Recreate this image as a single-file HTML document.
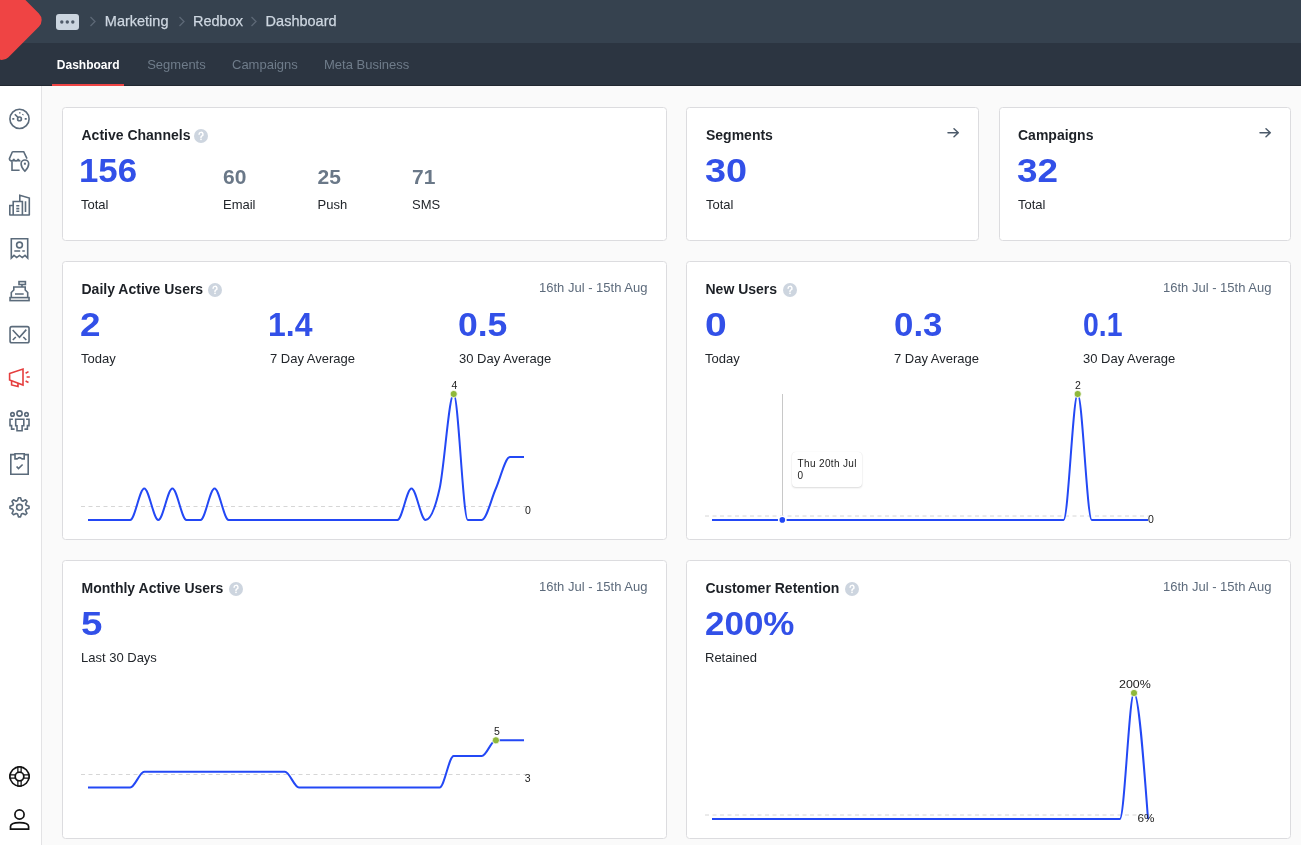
<!DOCTYPE html>
<html><head><meta charset="utf-8"><title>Dashboard</title>
<style>
html,body{margin:0;padding:0}
body{width:1301px;height:845px;overflow:hidden;position:relative;background:#fafafa;font-family:"Liberation Sans",sans-serif}
.abs{position:absolute;display:block}
.t{position:absolute;white-space:nowrap}
.card{position:absolute;box-sizing:border-box;background:#fff;border:1px solid #dcdcdf;border-radius:3.5px}
.q{position:absolute}
.q svg{display:block}
.tip{position:absolute;box-sizing:border-box;background:#fff;border-radius:4px;box-shadow:0 0 1px rgba(0,0,0,0.10),0 1px 2px rgba(0,0,0,0.14)}
</style></head><body><div id="root" style="position:absolute;left:0;top:0;width:1301px;height:845px;will-change:transform">
<div class="card" style="left:62px;top:107px;width:605px;height:134px"></div>
<div class="card" style="left:686px;top:107px;width:293px;height:134px"></div>
<div class="card" style="left:999px;top:107px;width:292px;height:134px"></div>
<div class="card" style="left:62px;top:261px;width:605px;height:279px"></div>
<div class="card" style="left:686px;top:261px;width:605px;height:279px"></div>
<div class="card" style="left:62px;top:560px;width:605px;height:279px"></div>
<div class="card" style="left:686px;top:560px;width:605px;height:279px"></div>
<div class="t" style="left:81.5px;top:126.65px;font-size:14px;line-height:17px;font-weight:700;color:#1d2127;">Active Channels</div>
<div class="q" style="left:194.0px;top:129.0px;width:14px;height:14px;"><svg width="14" height="14" viewBox="0 0 14 14"><circle cx="7" cy="7" r="7" fill="#cdd5df"/><path d="M5.1 5.3a1.95 1.95 0 1 1 2.6 1.85c-.45.2-.7.5-.7 1v.45" fill="none" stroke="#fff" stroke-width="1.5" stroke-linecap="round"/><circle cx="7" cy="10.3" r="0.85" fill="#fff"/></svg></div>
<div class="t" style="left:79.35272045028144px;top:150.22px;font-size:34px;line-height:41px;font-weight:700;color:#3250e8;transform:scaleX(1.0225);transform-origin:0 0">156</div>
<div class="t" style="left:81px;top:196.70px;font-size:13px;line-height:16px;font-weight:400;color:#22262b;">Total</div>
<div class="t" style="left:223px;top:164.42px;font-size:21px;line-height:25px;font-weight:700;color:#6a7888;">60</div>
<div class="t" style="left:223px;top:196.70px;font-size:13px;line-height:16px;font-weight:400;color:#22262b;">Email</div>
<div class="t" style="left:317.5px;top:164.42px;font-size:21px;line-height:25px;font-weight:700;color:#6a7888;">25</div>
<div class="t" style="left:317.5px;top:196.70px;font-size:13px;line-height:16px;font-weight:400;color:#22262b;">Push</div>
<div class="t" style="left:412px;top:164.42px;font-size:21px;line-height:25px;font-weight:700;color:#6a7888;">71</div>
<div class="t" style="left:412px;top:196.70px;font-size:13px;line-height:16px;font-weight:400;color:#22262b;">SMS</div>
<div class="t" style="left:706px;top:126.65px;font-size:14px;line-height:17px;font-weight:700;color:#1d2127;">Segments</div>
<div class="t" style="left:704.9988764044944px;top:150.22px;font-size:34px;line-height:41px;font-weight:700;color:#3250e8;transform:scaleX(1.1124);transform-origin:0 0">30</div>
<div class="t" style="left:706px;top:196.70px;font-size:13px;line-height:16px;font-weight:400;color:#22262b;">Total</div>
<svg class="abs" style="left:946px;top:127.3px" width="14" height="12" viewBox="0 0 14 12"><path d="M2 5.7H12.3M8 1.7L12.3 5.7L8 9.7" fill="none" stroke="#4c5a6a" stroke-width="1.5" stroke-linecap="round" stroke-linejoin="round"/></svg>
<div class="t" style="left:1018px;top:126.65px;font-size:14px;line-height:17px;font-weight:700;color:#1d2127;">Campaigns</div>
<div class="t" style="left:1017.2243697478992px;top:150.22px;font-size:34px;line-height:41px;font-weight:700;color:#3250e8;transform:scaleX(1.0840);transform-origin:0 0">32</div>
<div class="t" style="left:1018px;top:196.70px;font-size:13px;line-height:16px;font-weight:400;color:#22262b;">Total</div>
<svg class="abs" style="left:1258px;top:127.3px" width="14" height="12" viewBox="0 0 14 12"><path d="M2 5.7H12.3M8 1.7L12.3 5.7L8 9.7" fill="none" stroke="#4c5a6a" stroke-width="1.5" stroke-linecap="round" stroke-linejoin="round"/></svg>
<div class="t" style="left:81.5px;top:280.75px;font-size:14px;line-height:17px;font-weight:700;color:#1d2127;">Daily Active Users</div>
<div class="q" style="left:207.6px;top:282.5px;width:14px;height:14px;"><svg width="14" height="14" viewBox="0 0 14 14"><circle cx="7" cy="7" r="7" fill="#cdd5df"/><path d="M5.1 5.3a1.95 1.95 0 1 1 2.6 1.85c-.45.2-.7.5-.7 1v.45" fill="none" stroke="#fff" stroke-width="1.5" stroke-linecap="round"/><circle cx="7" cy="10.3" r="0.85" fill="#fff"/></svg></div>
<div class="t" style="left:539px;top:280.10px;font-size:13px;line-height:16px;font-weight:400;color:#5d6b7c;">16th Jul - 15th Aug</div>
<div class="t" style="left:80.49756097560974px;top:303.72px;font-size:34px;line-height:41px;font-weight:700;color:#3250e8;transform:scaleX(1.0854);transform-origin:0 0">2</div>
<div class="t" style="left:81px;top:350.50px;font-size:13px;line-height:16px;font-weight:400;color:#22262b;">Today</div>
<div class="t" style="left:268.42628062360797px;top:303.72px;font-size:34px;line-height:41px;font-weight:700;color:#3250e8;transform:scaleX(0.9399);transform-origin:0 0">1.4</div>
<div class="t" style="left:270px;top:350.50px;font-size:13px;line-height:16px;font-weight:400;color:#22262b;">7 Day Average</div>
<div class="t" style="left:458.04209354120263px;top:303.72px;font-size:34px;line-height:41px;font-weight:700;color:#3250e8;transform:scaleX(1.0445);transform-origin:0 0">0.5</div>
<div class="t" style="left:459px;top:350.50px;font-size:13px;line-height:16px;font-weight:400;color:#22262b;">30 Day Average</div>
<div class="t" style="left:705.5px;top:280.75px;font-size:14px;line-height:17px;font-weight:700;color:#1d2127;">New Users</div>
<div class="q" style="left:782.8px;top:282.5px;width:14px;height:14px;"><svg width="14" height="14" viewBox="0 0 14 14"><circle cx="7" cy="7" r="7" fill="#cdd5df"/><path d="M5.1 5.3a1.95 1.95 0 1 1 2.6 1.85c-.45.2-.7.5-.7 1v.45" fill="none" stroke="#fff" stroke-width="1.5" stroke-linecap="round"/><circle cx="7" cy="10.3" r="0.85" fill="#fff"/></svg></div>
<div class="t" style="left:1163px;top:280.10px;font-size:13px;line-height:16px;font-weight:400;color:#5d6b7c;">16th Jul - 15th Aug</div>
<div class="t" style="left:705.0074074074074px;top:303.72px;font-size:34px;line-height:41px;font-weight:700;color:#3250e8;transform:scaleX(1.1481);transform-origin:0 0">0</div>
<div class="t" style="left:705px;top:350.50px;font-size:13px;line-height:16px;font-weight:400;color:#22262b;">Today</div>
<div class="t" style="left:894.267937219731px;top:303.72px;font-size:34px;line-height:41px;font-weight:700;color:#3250e8;transform:scaleX(1.0247);transform-origin:0 0">0.3</div>
<div class="t" style="left:894px;top:350.50px;font-size:13px;line-height:16px;font-weight:400;color:#22262b;">7 Day Average</div>
<div class="t" style="left:1083.4142538975502px;top:303.72px;font-size:34px;line-height:41px;font-weight:700;color:#3250e8;transform:scaleX(0.8352);transform-origin:0 0">0.1</div>
<div class="t" style="left:1083px;top:350.50px;font-size:13px;line-height:16px;font-weight:400;color:#22262b;">30 Day Average</div>
<div class="t" style="left:81.5px;top:579.75px;font-size:14px;line-height:17px;font-weight:700;color:#1d2127;">Monthly Active Users</div>
<div class="q" style="left:229.0px;top:581.5px;width:14px;height:14px;"><svg width="14" height="14" viewBox="0 0 14 14"><circle cx="7" cy="7" r="7" fill="#cdd5df"/><path d="M5.1 5.3a1.95 1.95 0 1 1 2.6 1.85c-.45.2-.7.5-.7 1v.45" fill="none" stroke="#fff" stroke-width="1.5" stroke-linecap="round"/><circle cx="7" cy="10.3" r="0.85" fill="#fff"/></svg></div>
<div class="t" style="left:539px;top:579.10px;font-size:13px;line-height:16px;font-weight:400;color:#5d6b7c;">16th Jul - 15th Aug</div>
<div class="t" style="left:80.64191616766466px;top:602.72px;font-size:34px;line-height:41px;font-weight:700;color:#3250e8;transform:scaleX(1.1317);transform-origin:0 0">5</div>
<div class="t" style="left:81px;top:649.50px;font-size:13px;line-height:16px;font-weight:400;color:#22262b;">Last 30 Days</div>
<div class="t" style="left:705.5px;top:579.75px;font-size:14px;line-height:17px;font-weight:700;color:#1d2127;">Customer Retention</div>
<div class="q" style="left:845.0px;top:581.5px;width:14px;height:14px;"><svg width="14" height="14" viewBox="0 0 14 14"><circle cx="7" cy="7" r="7" fill="#cdd5df"/><path d="M5.1 5.3a1.95 1.95 0 1 1 2.6 1.85c-.45.2-.7.5-.7 1v.45" fill="none" stroke="#fff" stroke-width="1.5" stroke-linecap="round"/><circle cx="7" cy="10.3" r="0.85" fill="#fff"/></svg></div>
<div class="t" style="left:1163px;top:579.10px;font-size:13px;line-height:16px;font-weight:400;color:#5d6b7c;">16th Jul - 15th Aug</div>
<div class="t" style="left:705.2660777385158px;top:602.72px;font-size:34px;line-height:41px;font-weight:700;color:#3250e8;transform:scaleX(1.0283);transform-origin:0 0">200%</div>
<div class="t" style="left:705px;top:649.50px;font-size:13px;line-height:16px;font-weight:400;color:#22262b;">Retained</div>
<svg class="abs" style="left:0;top:0" width="1301" height="845">
<g stroke="#d6d6d6" stroke-width="1" stroke-dasharray="4 3.5" fill="none">
<line x1="81" y1="506.5" x2="530" y2="506.5"/>
<line x1="705" y1="516" x2="1150" y2="516"/>
<line x1="81" y1="774.5" x2="530" y2="774.5"/>
<line x1="705" y1="815" x2="1150" y2="815"/>
</g>
<line x1="782.5" y1="394" x2="782.5" y2="520" stroke="#c8c8c8" stroke-width="1"/>
<g fill="none" stroke="#2348f5" stroke-width="2" stroke-linejoin="round">
<path d="M88.00,520.00C92.69,520.00,97.38,520.00,102.06,520.00C106.75,520.00,111.44,520.00,116.13,520.00C120.82,520.00,125.51,520.00,130.19,520.00C134.88,520.00,139.57,488.50,144.26,488.50C148.95,488.50,153.63,520.00,158.32,520.00C163.01,520.00,167.70,488.50,172.39,488.50C177.08,488.50,181.76,520.00,186.45,520.00C191.14,520.00,195.83,520.00,200.52,520.00C205.20,520.00,209.89,488.50,214.58,488.50C219.27,488.50,223.96,520.00,228.65,520.00C233.33,520.00,238.02,520.00,242.71,520.00C247.40,520.00,252.09,520.00,256.77,520.00C261.46,520.00,266.15,520.00,270.84,520.00C275.53,520.00,280.22,520.00,284.90,520.00C289.59,520.00,294.28,520.00,298.97,520.00C303.66,520.00,308.34,520.00,313.03,520.00C317.72,520.00,322.41,520.00,327.10,520.00C331.78,520.00,336.47,520.00,341.16,520.00C345.85,520.00,350.54,520.00,355.23,520.00C359.91,520.00,364.60,520.00,369.29,520.00C373.98,520.00,378.67,520.00,383.35,520.00C388.04,520.00,392.73,520.00,397.42,520.00C402.11,520.00,406.80,488.50,411.48,488.50C416.17,488.50,420.86,520.00,425.55,520.00C430.24,520.00,434.92,509.50,439.61,488.50C444.30,467.50,448.99,394.00,453.68,394.00C458.37,394.00,463.05,520.00,467.74,520.00C472.43,520.00,477.12,520.00,481.81,520.00C486.49,520.00,491.18,499.00,495.87,488.50C500.56,478.00,505.25,457.00,509.94,457.00C514.62,457.00,519.31,457.00,524.00,457.00"/>
<path d="M712.00,520.00C716.69,520.00,721.38,520.00,726.06,520.00C730.75,520.00,735.44,520.00,740.13,520.00C744.82,520.00,749.51,520.00,754.19,520.00C758.88,520.00,763.57,520.00,768.26,520.00C772.95,520.00,777.63,520.00,782.32,520.00C787.01,520.00,791.70,520.00,796.39,520.00C801.08,520.00,805.76,520.00,810.45,520.00C815.14,520.00,819.83,520.00,824.52,520.00C829.20,520.00,833.89,520.00,838.58,520.00C843.27,520.00,847.96,520.00,852.65,520.00C857.33,520.00,862.02,520.00,866.71,520.00C871.40,520.00,876.09,520.00,880.77,520.00C885.46,520.00,890.15,520.00,894.84,520.00C899.53,520.00,904.22,520.00,908.90,520.00C913.59,520.00,918.28,520.00,922.97,520.00C927.66,520.00,932.34,520.00,937.03,520.00C941.72,520.00,946.41,520.00,951.10,520.00C955.78,520.00,960.47,520.00,965.16,520.00C969.85,520.00,974.54,520.00,979.23,520.00C983.91,520.00,988.60,520.00,993.29,520.00C997.98,520.00,1002.67,520.00,1007.35,520.00C1012.04,520.00,1016.73,520.00,1021.42,520.00C1026.11,520.00,1030.80,520.00,1035.48,520.00C1040.17,520.00,1044.86,520.00,1049.55,520.00C1054.24,520.00,1058.92,520.00,1063.61,520.00C1068.30,520.00,1072.99,394.00,1077.68,394.00C1082.37,394.00,1087.05,520.00,1091.74,520.00C1096.43,520.00,1101.12,520.00,1105.81,520.00C1110.49,520.00,1115.18,520.00,1119.87,520.00C1124.56,520.00,1129.25,520.00,1133.94,520.00C1138.62,520.00,1143.31,520.00,1148.00,520.00"/>
<path d="M88.00,787.50C92.69,787.50,97.38,787.50,102.06,787.50C106.75,787.50,111.44,787.50,116.13,787.50C120.82,787.50,125.51,787.50,130.19,787.50C134.88,787.50,139.57,771.75,144.26,771.75C148.95,771.75,153.63,771.75,158.32,771.75C163.01,771.75,167.70,771.75,172.39,771.75C177.08,771.75,181.76,771.75,186.45,771.75C191.14,771.75,195.83,771.75,200.52,771.75C205.20,771.75,209.89,771.75,214.58,771.75C219.27,771.75,223.96,771.75,228.65,771.75C233.33,771.75,238.02,771.75,242.71,771.75C247.40,771.75,252.09,771.75,256.77,771.75C261.46,771.75,266.15,771.75,270.84,771.75C275.53,771.75,280.22,771.75,284.90,771.75C289.59,771.75,294.28,787.50,298.97,787.50C303.66,787.50,308.34,787.50,313.03,787.50C317.72,787.50,322.41,787.50,327.10,787.50C331.78,787.50,336.47,787.50,341.16,787.50C345.85,787.50,350.54,787.50,355.23,787.50C359.91,787.50,364.60,787.50,369.29,787.50C373.98,787.50,378.67,787.50,383.35,787.50C388.04,787.50,392.73,787.50,397.42,787.50C402.11,787.50,406.80,787.50,411.48,787.50C416.17,787.50,420.86,787.50,425.55,787.50C430.24,787.50,434.92,787.50,439.61,787.50C444.30,787.50,448.99,756.00,453.68,756.00C458.37,756.00,463.05,756.00,467.74,756.00C472.43,756.00,477.12,756.00,481.81,756.00C486.49,756.00,491.18,740.25,495.87,740.25C500.56,740.25,505.25,740.25,509.94,740.25C514.62,740.25,519.31,740.25,524.00,740.25"/>
<path d="M712.00,819.00C716.69,819.00,721.38,819.00,726.06,819.00C730.75,819.00,735.44,819.00,740.13,819.00C744.82,819.00,749.51,819.00,754.19,819.00C758.88,819.00,763.57,819.00,768.26,819.00C772.95,819.00,777.63,819.00,782.32,819.00C787.01,819.00,791.70,819.00,796.39,819.00C801.08,819.00,805.76,819.00,810.45,819.00C815.14,819.00,819.83,819.00,824.52,819.00C829.20,819.00,833.89,819.00,838.58,819.00C843.27,819.00,847.96,819.00,852.65,819.00C857.33,819.00,862.02,819.00,866.71,819.00C871.40,819.00,876.09,819.00,880.77,819.00C885.46,819.00,890.15,819.00,894.84,819.00C899.53,819.00,904.22,819.00,908.90,819.00C913.59,819.00,918.28,819.00,922.97,819.00C927.66,819.00,932.34,819.00,937.03,819.00C941.72,819.00,946.41,819.00,951.10,819.00C955.78,819.00,960.47,819.00,965.16,819.00C969.85,819.00,974.54,819.00,979.23,819.00C983.91,819.00,988.60,819.00,993.29,819.00C997.98,819.00,1002.67,819.00,1007.35,819.00C1012.04,819.00,1016.73,819.00,1021.42,819.00C1026.11,819.00,1030.80,819.00,1035.48,819.00C1040.17,819.00,1044.86,819.00,1049.55,819.00C1054.24,819.00,1058.92,819.00,1063.61,819.00C1068.30,819.00,1072.99,819.00,1077.68,819.00C1082.37,819.00,1087.05,819.00,1091.74,819.00C1096.43,819.00,1101.12,819.00,1105.81,819.00C1110.49,819.00,1115.18,819.00,1119.87,819.00C1124.56,819.00,1129.25,693.00,1133.94,693.00C1138.62,693.00,1143.31,756.00,1148.00,819.00"/>
</g>
<g fill="#8fb83a" stroke="#fff" stroke-width="0.8">
<circle cx="453.7" cy="394" r="3.6"/>
<circle cx="1077.7" cy="394" r="3.6"/>
<circle cx="495.9" cy="740.3" r="3.6"/>
<circle cx="1134" cy="693" r="3.6"/>
</g>
<circle cx="782.3" cy="519.9" r="4.4" fill="#fff"/>
<circle cx="782.3" cy="519.9" r="2.8" fill="#2348f5"/>
<g font-family="Liberation Sans" font-size="10.5" fill="#222">
<text x="451.5" y="389">4</text>
<text x="525" y="514.3">0</text>
<text x="1075" y="389">2</text>
<text x="1148" y="522.9">0</text>
<text x="494" y="734.6">5</text>
<text x="524.8" y="781.9">3</text>
<text x="1119" y="688" textLength="31.8" lengthAdjust="spacingAndGlyphs">200%</text>
<text x="1137.4" y="822.2" textLength="17" lengthAdjust="spacingAndGlyphs">6%</text>
</g>
</svg>
<div class="tip" style="left:791.5px;top:452px;width:70px;height:35px"></div>
<div class="t" style="left:797.6px;top:458.34px;font-size:10px;line-height:12px;font-weight:400;color:#222;letter-spacing:0.35px">Thu 20th Jul</div>
<div class="t" style="left:797.6px;top:470.14px;font-size:10px;line-height:12px;font-weight:400;color:#222;">0</div>
<div class="abs" style="left:0;top:86px;width:41px;height:759px;background:#fff"></div>
<div class="abs" style="left:41px;top:86px;width:1px;height:759px;background:#e3e3e5"></div>
<svg class="abs" style="left:0;top:100px;color:#5b6b7b" width="42" height="42" viewBox="0 0 42 42"><g fill="none" stroke="currentColor" stroke-width="1.6" stroke-linejoin="miter"><circle cx="19.5" cy="18.9" r="9.6"/><circle cx="19.5" cy="18.9" r="1.9"/><path d="M18.2 17.6L14.8 14.2M12.3 18.9H14.3M24.7 18.9H26.7M19.8 12.2V13.6M23.2 14.2L22.6 15"/></g></svg>
<svg class="abs" style="left:0;top:141px;color:#5b6b7b" width="42" height="42" viewBox="0 0 42 42"><g fill="none" stroke="currentColor" stroke-width="1.6" stroke-linejoin="miter"><path d="M12.4 10.7H23.7L27 17.6M12.4 10.7L9.4 17.6C9.4 19 10.3 19.9 11.6 19.9C12.9 19.9 13.8 19 13.8 17.8C13.8 19 14.7 19.9 16 19.9C17.3 19.9 18.2 19 18.2 17.8C18.2 19 19.1 19.9 20.4 19.9M12 20V29.3H19.6"/><path d="M24.9 30.2C22.8 28.1 21.1 25.9 21.1 22.8A3.8 3.8 0 0 1 28.7 22.8C28.7 25.9 27 28.1 24.9 30.2Z"/><rect x="23.9" y="21.7" width="2" height="2" fill="currentColor" stroke="none"/></g></svg>
<svg class="abs" style="left:0;top:184px;color:#5b6b7b" width="42" height="42" viewBox="0 0 42 42"><g fill="none" stroke="currentColor" stroke-width="1.6" stroke-linejoin="miter"><path d="M9.3 31H29.8M9.8 31V21.5H13.2M13.2 31V17.5H22.4V31M19.8 17.5V11.2L29.3 14V31M16.3 21.8H19.3M16.3 24.6H19.3M16.3 27.3H19.3M25.5 17.3V28"/></g></svg>
<svg class="abs" style="left:0;top:227px;color:#5b6b7b" width="42" height="42" viewBox="0 0 42 42"><g fill="none" stroke="currentColor" stroke-width="1.6" stroke-linejoin="miter"><path d="M11.3 31V11.8H27.7V31L25 28.4L22.3 30.6L19.5 28.4L16.7 30.6L14 28.4Z"/><circle cx="19.5" cy="18" r="2.9"/><path d="M14.3 24H20.2M22.3 24H24.8"/></g></svg>
<svg class="abs" style="left:0;top:270px;color:#5b6b7b" width="42" height="42" viewBox="0 0 42 42"><g fill="none" stroke="currentColor" stroke-width="1.6" stroke-linejoin="miter"><rect x="10.05" y="27.6" width="19" height="3"/><path d="M11.3 27.5V22.5L13.8 20V17H25.2V20L27.7 22.5V27.5M15 24H23.7M22 17V14.5"/><rect x="19" y="11.6" width="6.4" height="2.9"/></g></svg>
<svg class="abs" style="left:0;top:314px;color:#5b6b7b" width="42" height="42" viewBox="0 0 42 42"><g fill="none" stroke="currentColor" stroke-width="1.6" stroke-linejoin="miter"><rect x="10.05" y="12.65" width="19" height="16.1" rx="1.8"/><path d="M12.7 16L19.5 23.2L26.3 15.6M12.8 26L15.8 23M23.3 23L26.3 26"/></g></svg>
<svg class="abs" style="left:0;top:357px;color:#e53e3e" width="42" height="42" viewBox="0 0 42 42"><g fill="none" stroke="currentColor" stroke-width="1.6" stroke-linejoin="miter"><path d="M9.6 16.5L23 12V28L9.6 23Z"/><path d="M11.6 23.8V28L18 29.6V26"/><path d="M25.6 16.2L28.5 14.6M26.6 20H29.8M25.6 24L28.5 25.5"/></g></svg>
<svg class="abs" style="left:0;top:400px;color:#5b6b7b" width="42" height="42" viewBox="0 0 42 42"><g fill="none" stroke="currentColor" stroke-width="1.6" stroke-linejoin="miter"><circle cx="19.5" cy="13.5" r="2.6"/><circle cx="12.5" cy="14.4" r="1.75"/><circle cx="26.5" cy="14.4" r="1.75"/><path d="M15.7 19.2H23.8V25.8H22.1V30.8H17V25.8H15.7Z"/><path d="M12.9 19.2H10V25.6H11.6V29.1H14.6M26.1 19.2H29V25.6H27.4V29.1H24.4"/></g></svg>
<svg class="abs" style="left:0;top:443px;color:#5b6b7b" width="42" height="42" viewBox="0 0 42 42"><g fill="none" stroke="currentColor" stroke-width="1.6" stroke-linejoin="miter"><path d="M15 11.6H10.8V31.2H28.2V11.6H24.2"/><path d="M15 10.8H24.2V15.9H22C21.5 15.9 21.1 14.6 19.6 14.6C18.1 14.6 17.7 15.9 17.2 15.9H15Z"/><path d="M16.6 23.4L18.5 25.6L22.6 21.5"/></g></svg>
<svg class="abs" style="left:0;top:486px;color:#5b6b7b" width="42" height="42" viewBox="0 0 42 42"><g fill="none" stroke="currentColor" stroke-width="1.6" stroke-linejoin="miter"><path stroke-linejoin="round" d="M18.45 11.76L20.55 11.76L21.45 14.58L22.87 15.17L25.50 13.81L26.99 15.30L25.63 17.93L26.22 19.35L29.04 20.25L29.04 22.35L26.22 23.25L25.63 24.67L26.99 27.30L25.50 28.79L22.87 27.43L21.45 28.02L20.55 30.84L18.45 30.84L17.55 28.02L16.13 27.43L13.50 28.79L12.01 27.30L13.37 24.67L12.78 23.25L9.96 22.35L9.96 20.25L12.78 19.35L13.37 17.93L12.01 15.30L13.50 13.81L16.13 15.17L17.55 14.58Z"/><circle cx="19.5" cy="21.3" r="2.9"/></g></svg>
<svg class="abs" style="left:0;top:755px;color:#111" width="42" height="42" viewBox="0 0 42 42"><g fill="none" stroke="currentColor" stroke-width="1.7"><circle cx="19.5" cy="21.5" r="9.55"/><circle cx="19.5" cy="21.5" r="4.3"/><g fill="currentColor" stroke="none"><rect x="17.25" y="11.2" width="4.5" height="6.3"/><rect x="17.25" y="25.5" width="4.5" height="6.3"/><rect x="9.2" y="19.25" width="6.3" height="4.5"/><rect x="23.5" y="19.25" width="6.3" height="4.5"/></g><g fill="#fff" stroke="none"><rect x="18.5" y="12.8" width="2" height="3.6"/><rect x="18.5" y="26.6" width="2" height="3.6"/><rect x="10.8" y="20.5" width="3.6" height="2"/><rect x="24.6" y="20.5" width="3.6" height="2"/></g></g></svg>
<svg class="abs" style="left:0;top:798px;color:#111" width="42" height="42" viewBox="0 0 42 42"><g fill="none" stroke="currentColor" stroke-width="1.7"><circle cx="19.5" cy="16.5" r="4.6"/><path d="M10.5 31.2H28.6V28.5C28.6 25.8 25.5 24.6 19.5 24.6C13.5 24.6 10.5 25.8 10.5 28.5Z"/></g></svg>
<div class="abs" style="left:0;top:0;width:1301px;height:43px;background:#36424f"></div>
<div class="abs" style="left:0;top:43px;width:1301px;height:43px;background:#2c3541"></div>
<div class="abs" style="left:0;top:85px;width:1301px;height:1px;background:#222831"></div>
<div class="abs" style="left:-29.25px;top:-10.65px;width:61.5px;height:61.5px;background:#ef4444;border-radius:9.5px;transform:rotate(45deg)"></div>
<div class="abs" style="left:56px;top:14px;width:23px;height:16px;background:#cbd5df;border-radius:3px"></div>
<svg class="abs" style="left:56px;top:14px" width="23" height="16"><g fill="#4f5b69"><circle cx="5.8" cy="8" r="1.7"/><circle cx="11.3" cy="8" r="1.7"/><circle cx="16.8" cy="8" r="1.7"/></g></svg>
<svg class="abs" style="left:89px;top:16px" width="8" height="11" viewBox="0 0 8 11"><path d="M1.5 1L6 5.5L1.5 10" fill="none" stroke="#5d6876" stroke-width="1.3"/></svg>
<div class="t" style="left:104.8px;top:12.58px;font-size:14.5px;line-height:17px;font-weight:400;color:#ced7e1;-webkit-text-stroke:0.25px #ced7e1">Marketing</div>
<svg class="abs" style="left:177.5px;top:16px" width="8" height="11" viewBox="0 0 8 11"><path d="M1.5 1L6 5.5L1.5 10" fill="none" stroke="#5d6876" stroke-width="1.3"/></svg>
<div class="t" style="left:193px;top:12.58px;font-size:14.5px;line-height:17px;font-weight:400;color:#ced7e1;-webkit-text-stroke:0.25px #ced7e1">Redbox</div>
<svg class="abs" style="left:250px;top:16px" width="8" height="11" viewBox="0 0 8 11"><path d="M1.5 1L6 5.5L1.5 10" fill="none" stroke="#5d6876" stroke-width="1.3"/></svg>
<div class="t" style="left:265.6px;top:12.58px;font-size:14.5px;line-height:17px;font-weight:400;color:#ced7e1;-webkit-text-stroke:0.25px #ced7e1">Dashboard</div>
<div class="t" style="left:56.8px;top:57.74px;font-size:12px;line-height:14px;font-weight:700;color:#ffffff;">Dashboard</div>
<div class="t" style="left:147.2px;top:57.40px;font-size:13px;line-height:16px;font-weight:400;color:#6f7c8a;">Segments</div>
<div class="t" style="left:232px;top:57.40px;font-size:13px;line-height:16px;font-weight:400;color:#6f7c8a;">Campaigns</div>
<div class="t" style="left:324px;top:57.40px;font-size:13px;line-height:16px;font-weight:400;color:#6f7c8a;">Meta Business</div>
<div class="abs" style="left:52px;top:84px;width:72px;height:2px;background:#ef4444"></div>
</div></body></html>
